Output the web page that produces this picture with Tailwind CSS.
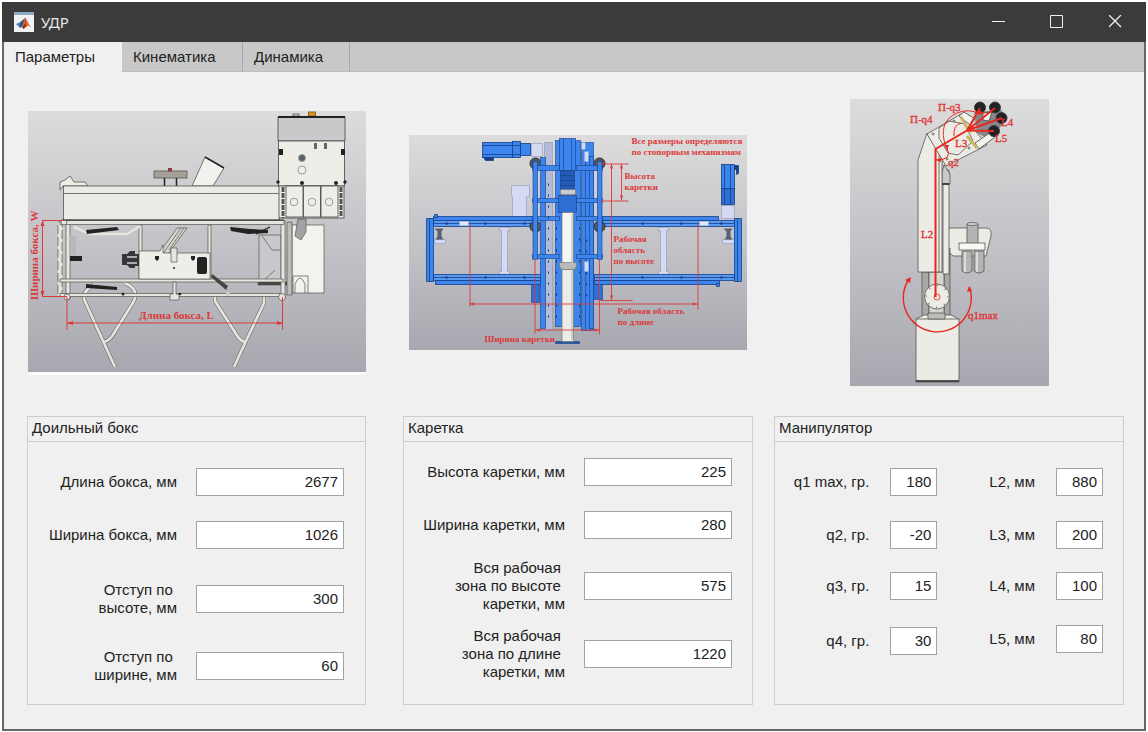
<!DOCTYPE html>
<html lang="ru">
  <head>
    <meta charset="UTF-8" />
    <meta name="viewport" content="width=device-width, initial-scale=1.0" />
    <title>УДР</title>
    <script src="https://cdn.jsdelivr.net/npm/@tailwindcss/browser@4"></script>
  </head>
  <body class="bg-white">
    <div
      class="min-h-screen p-[2px] pb-px flex flex-col font-['Liberation_Sans',Arial,sans-serif] text-[15px] leading-[18px] text-[#222222]"
    >
      <div class="grow flex flex-col bg-[#f0f0f0] border-2 border-t-0 border-[#666666]">
        <!-- Title bar -->
        <header class="-mx-[2px] h-10 flex items-center bg-[#3b3b3b] text-[#e8e8e8]">
          <svg class="ml-3 w-5 h-5" viewBox="0 0 20 20">
            <rect width="20" height="20" fill="#f1f2f4" />
            <rect width="20" height="3" fill="#8fa9c4" />
            <path d="M2 12L6.500 10L9.500 13L6 16Z" fill="#4a86b8" />
            <path d="M6.500 10L11 6L9.500 13L6 16Z" fill="#27517c" />
            <path d="M11 5.500C13 7 14 12 17.500 15.500L14 13.500L9.500 17L8 14Z" fill="#d9662b" />
            <path d="M11 5.500L11 12L8 15L9.500 17L12 14Z" fill="#8c2f1c" />
          </svg>
          <h1 class="ml-[7px] grow font-['Noto_Sans',sans-serif]">УДР</h1>
          <button type="button" aria-label="Свернуть" class="w-[58px] h-full flex items-center justify-center">
            <svg class="w-[14px] h-[14px]" viewBox="0 0 14 14" stroke="#f0f0f0"><path d="M0 6.500H13" /></svg>
          </button>
          <button type="button" aria-label="Развернуть" class="w-[58px] h-full flex items-center justify-center">
            <svg class="w-[14px] h-[14px]" viewBox="0 0 14 14" fill="none" stroke="#f0f0f0"><path d="M0.500 0.500H12.500V12.500H0.500Z" /></svg>
          </button>
          <button type="button" aria-label="Закрыть" class="w-[60px] h-full flex items-center justify-center">
            <svg class="w-[14px] h-[14px]" viewBox="0 0 14 14" stroke="#f0f0f0" stroke-width="1.3"><path d="M0 0L12 12M12 0L0 12" /></svg>
          </button>
        </header>

        <!-- Tabs -->
        <nav role="tablist" class="flex h-[30px] bg-[#c8c8c8]">
          <button type="button" role="tab" aria-selected="true" class="w-[118px] pl-[11px] text-left bg-[#f0f0f0]">Параметры</button>
          <button type="button" role="tab" aria-selected="false" class="w-[121px] pl-[11px] text-left border-r border-b border-r-[#a8a8a8] border-b-[#bdbdbd]">Кинематика</button>
          <button type="button" role="tab" aria-selected="false" class="w-[107px] pl-[11px] text-left border-r border-b border-r-[#a8a8a8] border-b-[#bdbdbd]">Динамика</button>
          <div class="grow border-b border-[#bdbdbd]"></div>
        </nav>

        <main class="pl-[23px] pr-5 pb-6 flex">
          <!-- Milking box -->
          <section class="flex-[339] flex flex-col">
            <div class="h-[344px] pb-[3px] flex items-center justify-center">
              <svg class="w-[338px] h-[264px]" viewBox="28 111 338 264" role="img" aria-label="Доильный бокс">
                <defs>
                  <linearGradient id="sky" x1="0" y1="0" x2="0" y2="1">
                    <stop offset="0" stop-color="#dcdcdc" />
                    <stop offset="0.5" stop-color="#c3c3c8" />
                    <stop offset="1" stop-color="#a7a7af" />
                  </linearGradient>
                </defs>
                <rect x="28" y="111" width="338" height="264" fill="#fafafa" />
                <rect x="28" y="111" width="338" height="261" fill="url(#sky)" />
                <!-- legs -->
                <g fill="none" stroke-linejoin="round">
                  <g stroke="#77776f" stroke-width="4">
                    <path d="M95 284Q83 290 84 299L103 341L115 367" />
                    <path d="M125 283Q139 289 134 301L114 333Q110 341 103 342" />
                    <path d="M215 295V301L236 334Q240 341 245 342" />
                    <path d="M264 293V303L246 341L234 367" />
                  </g>
                  <g stroke="#e6e5df" stroke-width="2.600">
                    <path d="M95 284Q83 290 84 299L103 341L115 367" />
                    <path d="M125 283Q139 289 134 301L114 333Q110 341 103 342" />
                    <path d="M215 295V301L236 334Q240 341 245 342" />
                    <path d="M264 293V303L246 341L234 367" />
                  </g>
                </g>
                <!-- right side units -->
                <g stroke="#55554f" stroke-width="0.700" fill="#f3f2ee">
                  <path d="M292 225H324V293H292Z" />
                  <path d="M293 293V276H308V293M295 293V284Q300 272 305 284V293" fill="none" />
                  <path d="M259 235H281V284H259Z" fill="#c9c9cd" />
                  <path d="M262 236L272 250H280M262 282L275 270" fill="none" />
                  <path d="M258 282H291V285H258Z" fill="#444444" />
                  <path d="M287 222H292V295H287Z" fill="#bcbcb8" />
                  <path d="M298 219H306V232L301 240L295 236Z" fill="#a3a3a5" />
                </g>
                <!-- frame -->
                <g fill="#e6e5df" stroke="#55554f" stroke-width="0.700">
                  <path d="M160 252L177 228H187L168 254Z" fill="#d5d4ce" />
                  <path d="M164 252L181 228M169 250L184 228" fill="none" />
                  <rect x="58" y="222" width="4" height="74" stroke-dasharray="9 3" />
                  <rect x="66" y="221" width="4" height="78" />
                  <rect x="139" y="225" width="3" height="55" />
                  <rect x="208" y="225" width="3" height="55" />
                  <rect x="281" y="221" width="4" height="77" />
                  <path d="M74 227L90 234H127L140 226" fill="none" stroke="#e6e5df" stroke-width="2.500" />
                  <path d="M256 234L270 227" fill="none" stroke="#444444" stroke-width="1.500" />
                  <rect x="60" y="220.500" width="224" height="4" />
                  <rect x="60" y="279" width="223" height="3" />
                  <rect x="60" y="293.500" width="220" height="3" />
                  <path d="M173 282H176V294H179V300H170V294H173Z" />
                  <circle cx="67" cy="297" r="3" />
                  <circle cx="282" cy="297" r="3.500" />
                  <circle cx="64" cy="222" r="3" />
                  <path d="M139 251H160L163 245V253H210V279H139Z" fill="#eeede8" />
                  <path d="M171 248H177V262H171Z" />
                </g>
                <g fill="#222222">
                  <path d="M122 254H127L130 251H135V254H139V266H135V268H130L127 265H122Z" fill="#33373a" />
                  <path d="M127 256H137V258H127ZM127 262H137V264H127Z" fill="#a9acae" />
                  <rect x="197" y="257" width="10" height="17" rx="2" />
                  <path d="M155 256H159V259L157 261L155 259ZM191 256H195V259L193 261L191 259Z" />
                  <rect x="70" y="256" width="12" height="5" />
                  <path d="M70 236H76V255H70Z" fill="#b8b8b8" />
                  <path d="M86 230L117 227L119 230L87 234Z" />
                  <path d="M86 284L117 287V290L86 288Z" />
                  <path d="M230 227L250 229L268 230V233L248 234L231 231Z" />
                  <path d="M212 274L228 286L226 290L211 277Z" fill="#444444" />
                  <circle cx="174" cy="268" r="1" />
                  <circle cx="228" cy="294" r="2" fill="#d0d0d0" />
                  <circle cx="123" cy="294" r="1.500" />
                  <circle cx="180" cy="294" r="1.300" />
                </g>
                <!-- upper beam -->
                <g stroke="#55554f" stroke-width="0.800" fill="#ecebe6">
                  <path d="M60 190V182L65 180L70 176L74 182H85L88 186H63Z" />
                  <path d="M192 186L205 157L224 168L213 186Z" fill="#f2f1ed" />
                  <path d="M205 157L224 168" stroke="#222222" stroke-width="1.500" />
                  <rect x="154" y="171" width="33" height="7" fill="#a5a198" />
                  <path d="M164.500 178V186M176.500 178V186" stroke="#222222" stroke-width="1.500" />
                  <rect x="168.500" y="168.500" width="3" height="2.500" fill="#a03030" stroke="#803030" />
                  <rect x="63.500" y="186" width="216" height="34" />
                  <path d="M63 193.500H279" />
                  <path d="M63 220H284" stroke="#222222" />
                </g>
                <!-- control cabinet -->
                <g stroke="#444444" stroke-width="0.800" fill="#eeede8">
                  <rect x="308.500" y="112" width="7" height="4" fill="#e09424" stroke="#80500f" />
                  <path d="M293 114H299V116H293Z" />
                  <path d="M278 117H345V141H278Z" fill="#c9c9cb" />
                  <path d="M278 117H345" stroke="#222222" stroke-width="2" />
                  <rect x="278.500" y="141" width="66" height="45" />
                  <rect x="279" y="186" width="65" height="32" />
                  <rect x="286" y="186" width="17" height="31" />
                  <rect x="303.500" y="186" width="17" height="31" />
                  <rect x="321" y="186" width="17" height="31" />
                  <path d="M283 187V218M341 187V216" stroke="#555555" stroke-width="3" stroke-dasharray="5 1" />
                  <circle cx="302" cy="158" r="3.500" fill="#59616a" stroke="#9a9a9a" />
                  <circle cx="302" cy="170" r="4" stroke="#888888" />
                  <circle cx="294" cy="202" r="3.800" stroke="#888888" />
                  <circle cx="312" cy="202" r="3.800" stroke="#888888" />
                  <circle cx="329" cy="202" r="3.800" stroke="#888888" />
                </g>
                <g fill="#222222">
                  <circle cx="302" cy="183" r="2" />
                  <circle cx="336" cy="183" r="2" />
                  <circle cx="278" cy="182" r="1.700" />
                  <circle cx="345" cy="182" r="1.700" />
                  <rect x="314" y="143" width="3" height="6" fill="#666666" />
                  <rect x="324" y="143" width="3" height="6" fill="#666666" />
                  <rect x="279" y="149" width="4" height="6" />
                  <rect x="341" y="149" width="4" height="6" />
                </g>
                <!-- dimensions -->
                <g stroke="#dc3a3a" fill="none">
                  <path d="M42.500 221V297M42 220.500H63M42 296.500H67" />
                  <path d="M67 323H283M67 297V330M282.500 297V330" />
                </g>
                <path d="M42.500 220L40.500 226H44.500ZM42.500 297L40.500 291H44.500ZM67 323L73 321V325ZM283 323L277 321V325Z" fill="#dc3a3a" />
                <g fill="#dc3a3a" class="font-['Liberation_Serif',serif] text-[11px] font-bold">
                  <text x="139" y="319">Длина бокса, L</text>
                  <text transform="translate(38 300) rotate(-90)">Ширина бокса, W</text>
                </g>
              </svg>
            </div>

            <div class="h-[289px] border border-[#cdcdcd]">
              <h2 class="h-[25px] pl-1 pt-[2px] border-b border-[#cdcdcd]">Доильный бокс</h2>
              <div class="pr-[21px] text-right">
                <div class="mt-[26px] flex items-center justify-end gap-[19px]">
                  <label for="boxLength">Длина бокса, мм</label>
                  <input id="boxLength" type="text" value="2677" class="w-[148px] h-7 pr-[5px] pb-[2px] text-right bg-white border border-[#a3a3a3]" />
                </div>
                <div class="mt-[25px] flex items-center justify-end gap-[19px]">
                  <label for="boxWidth">Ширина бокса, мм</label>
                  <input id="boxWidth" type="text" value="1026" class="w-[148px] h-7 pr-[5px] pb-[2px] text-right bg-white border border-[#a3a3a3]" />
                </div>
                <div class="mt-8 flex items-center justify-end gap-[19px]">
                  <label for="offsetHeight">Отступ по&nbsp;<br />высоте, мм</label>
                  <input id="offsetHeight" type="text" value="300" class="w-[148px] h-7 pr-[5px] pb-[2px] text-right bg-white border border-[#a3a3a3]" />
                </div>
                <div class="mt-[31px] flex items-center justify-end gap-[19px]">
                  <label for="offsetWidth">Отступ по&nbsp;<br />ширине, мм</label>
                  <input id="offsetWidth" type="text" value="60" class="w-[148px] h-7 pr-[5px] pb-[2px] text-right bg-white border border-[#a3a3a3]" />
                </div>
              </div>
            </div>
          </section>

          <!-- Carriage -->
          <section class="ml-[37px] flex-[350] flex flex-col">
            <div class="h-[344px] pb-[3px] flex items-center justify-center">
              <svg class="w-[338px] h-[215px]" viewBox="409.500 135.500 338 215" role="img" aria-label="Каретка">
                <rect x="409" y="135" width="339" height="216" fill="url(#sky)" />
                <!-- light parts -->
                <g fill="#d5d9f3" stroke="#8f96b5" stroke-width="0.600">
                  <path d="M532 144H543V157H532Z" />
                  <path d="M512 186H530V197H527V218H513V197H512Z" />
                  <path d="M500 228H510V231H508V272H510V275H500V272H502V231H500Z" />
                  <path d="M659 228H669V231H667V272H669V275H659V272H661V231H659Z" />
                  <rect x="722" y="206" width="13" height="13" />
                  <path d="M435 240H446V244H435ZM723 240H735V244H723Z" />
                  <rect x="545" y="143" width="8" height="188" fill="#b4bbd8" />
                </g>
                <path d="M435 229H444L442 232V237L444 240H436L438 237V232ZM724 229H733L731 232V237L733 240H725L727 237V232Z" fill="#5b6070" />
                <!-- side frames -->
                <g fill="#3c84ee" stroke="#163f86" stroke-width="0.800">
                  <path d="M434 217H534V221H434ZM603 217H719V221H603Z" />
                  <path d="M434 221H534V227H434ZM603 221H735V227H603Z" fill="#5a9af3" />
                  <path d="M434 275H541V281H434ZM595 275H735V281H595Z" fill="#5a9af3" />
                  <path d="M436 281H541V285H436ZM595 281H720V285H595Z" />
                  <path d="M427 219H434V282H427ZM735 219H742V282H735Z" />
                  <path d="M430 219V282M738 219V282M434 224H534M603 224H735M434 278H541M595 278H735" fill="none" />
                  <path d="M435 215H438V218H435ZM717 284H720V287H717Z" />
                </g>
                <g fill="#163f86">
                  <circle cx="447" cy="224" r="1.300" /><circle cx="486" cy="224" r="1.300" /><circle cx="525" cy="224" r="1.300" />
                  <circle cx="447" cy="278" r="1.300" /><circle cx="486" cy="278" r="1.300" /><circle cx="525" cy="278" r="1.300" />
                  <circle cx="643" cy="224" r="1.300" /><circle cx="682" cy="224" r="1.300" /><circle cx="722" cy="224" r="1.300" />
                  <circle cx="643" cy="278" r="1.300" /><circle cx="682" cy="278" r="1.300" /><circle cx="722" cy="278" r="1.300" />
                </g>
                <path d="M460 222H469V226H460ZM700 222H709V226H700Z" fill="#e6e8f5" />
                <!-- motors -->
                <g fill="#3c84ee" stroke="#163f86" stroke-width="0.800">
                  <rect x="483" y="143" width="31" height="15" />
                  <rect x="513" y="142" width="8" height="16" />
                  <rect x="521" y="144" width="10" height="12" />
                  <path d="M484 158H494V161H486Z" fill="#163f86" />
                  <path d="M483 146H521M483 155H521" fill="none" />
                  <rect x="722" y="165" width="13" height="25" />
                  <rect x="722" y="189" width="13" height="16" fill="#2f6fd4" />
                  <path d="M725 165V205M731 165V205" fill="none" />
                  <path d="M735 166H739V174L737 175V170H735Z" fill="#163f86" />
                </g>
                <!-- carriage -->
                <g fill="#55585c" stroke="#2b2d30">
                  <circle cx="536" cy="164" r="5.500" /><circle cx="536" cy="227" r="5.500" />
                  <circle cx="600" cy="164" r="5.500" /><circle cx="600" cy="227" r="5.500" />
                </g>
                <g fill="#3c84ee" stroke="#163f86" stroke-width="0.600">
                  <path d="M532 285H540V303H532ZM594 285H603V300H594Z" fill="#2f6fd4" />
                  <rect x="541" y="158" width="5" height="171" />
                  <rect x="582" y="143" width="12" height="188" />
                  <path d="M586 143V331" fill="none" />
                  <rect x="590" y="157" width="4" height="172" />
                  <rect x="556" y="141" width="7" height="186" />
                  <rect x="574" y="141" width="7" height="186" />
                  <path d="M533 166H560V171H533ZM533 199H560V203H533ZM533 217H560V221H533ZM533 255H560V259H533Z" />
                  <path d="M577 166H603V171H577ZM577 199H603V203H577ZM577 217H603V221H577ZM577 255H603V259H577Z" />
                  <rect x="533.500" y="162" width="4.500" height="98" />
                  <rect x="598" y="162" width="4.500" height="98" />
                  <rect x="560" y="139" width="16" height="32" />
                  <path d="M564 139V171M572 139V171" fill="none" />
                  <rect x="561" y="171" width="14" height="20" fill="#2459b4" />
                  <path d="M561 176H575M561 181H575M561 186H575" fill="none" />
                  <rect x="559" y="196" width="18" height="17" fill="#2f6fd4" />
                  <path d="M556 342H580V344H556Z" fill="#23589e" />
                </g>
                <g fill="none" stroke="#102f66" stroke-width="1" stroke-dasharray="2 9">
                  <path d="M557 228V325M580 228V325" />
                  <path d="M549 184V322M587 240V300" />
                </g>
                <path d="M587 152V162M587 262V272M584 143V150" stroke="#d5d9f3" stroke-width="4" />
                <!-- pipe -->
                <g stroke="#77776f" stroke-width="0.700">
                  <path d="M561 190H576V195H561Z" fill="#c9ccd8" />
                  <path d="M562.500 213H574V265H562.500Z" fill="#f6f6f4" />
                  <path d="M562.500 270H574V342H562.500Z" fill="#ebebe7" />
                  <path d="M560 263H577V267L575 270H562L560 267Z" fill="#b9bab9" />
                  <path d="M572.500 214V264M572.500 271V341" stroke="#c6c6c3" stroke-width="1.500" />
                </g>
                <!-- dimensions -->
                <g stroke="#dc3a3a" stroke-width="0.900" fill="none">
                  <path d="M470.500 224V307M698.500 224V310M470 304.500H698" />
                  <path d="M535.500 260V334M600 260V335M536 330.500H600" />
                  <path d="M612 164V301M600 164.500H629M622 164V201M600 201.500H629M601 301H633" />
                </g>
                <path d="M470 304.500L475 303V306ZM698 304.500L693 303V306ZM536 330.500L541 329V332ZM600 330.500L595 329V332ZM612 164L610.500 169H613.500ZM612 301L610.500 296H613.500ZM622 164L620.500 169H623.500ZM622 201L620.500 196H623.500Z" fill="#dc3a3a" />
                <g fill="#dc3a3a" class="font-['Liberation_Serif',serif] text-[9px] font-bold">
                  <text x="632" y="144">Все размеры определяются</text>
                  <text x="632" y="155">по стопорным механизмам</text>
                  <text x="625" y="179">Высота</text>
                  <text x="625" y="190">каретки</text>
                  <text x="614" y="242">Рабочая</text>
                  <text x="614" y="253">область</text>
                  <text x="614" y="264">по высоте</text>
                  <text x="618" y="314">Рабочая область</text>
                  <text x="618" y="325">по длине</text>
                  <text x="485" y="342">Ширина каретки</text>
                </g>
              </svg>
            </div>

            <div class="h-[289px] border border-[#cdcdcd]">
              <h2 class="h-[25px] pl-1 pt-[2px] border-b border-[#cdcdcd]">Каретка</h2>
              <div class="pr-5 text-right">
                <div class="mt-4 flex items-center justify-end gap-[19px]">
                  <label for="carriageHeight">Высота каретки, мм</label>
                  <input id="carriageHeight" type="text" value="225" class="w-[148px] h-7 pr-[5px] pb-[2px] text-right bg-white border border-[#a3a3a3]" />
                </div>
                <div class="mt-[25px] flex items-center justify-end gap-[19px]">
                  <label for="carriageWidth">Ширина каретки, мм</label>
                  <input id="carriageWidth" type="text" value="280" class="w-[148px] h-7 pr-[5px] pb-[2px] text-right bg-white border border-[#a3a3a3]" />
                </div>
                <div class="mt-5 flex items-center justify-end gap-[19px]">
                  <label for="zoneHeight">Вся рабочая&nbsp;<br />зона по высоте&nbsp;<br />каретки, мм</label>
                  <input id="zoneHeight" type="text" value="575" class="w-[148px] h-7 pr-[5px] pb-[2px] text-right bg-white border border-[#a3a3a3]" />
                </div>
                <div class="mt-[14px] flex items-center justify-end gap-[19px]">
                  <label for="zoneLength">Вся рабочая&nbsp;<br />зона по длине&nbsp;<br />каретки, мм</label>
                  <input id="zoneLength" type="text" value="1220" class="w-[148px] h-7 pr-[5px] pb-[2px] text-right bg-white border border-[#a3a3a3]" />
                </div>
              </div>
            </div>
          </section>

          <!-- Manipulator -->
          <section class="ml-[21px] flex-[350] flex flex-col">
            <div class="h-[344px] pb-[3px] flex items-center justify-center">
              <svg class="w-[199px] h-[287px]" viewBox="849 99 199 287" role="img" aria-label="Манипулятор">
                <rect x="849" y="99" width="199" height="287" fill="url(#sky)" />
                <g fill="#ecebe6" stroke="#55554f" stroke-width="0.800">
                  <!-- side pump -->
                  <path d="M948 228H986Q991 229 990 236L985 256H952L944 248Z" />
                  <path d="M966 224H977V244H966Z" fill="#b4b4b4" />
                  <ellipse cx="971.500" cy="224" rx="5.500" ry="1.500" fill="#d5d5d5" />
                  <path d="M961 251H971V271Q966 275 961 271ZM973 251H983V271Q978 275 973 271Z" fill="#b4b4b4" />
                  <path d="M964 252V272M976 252V272" stroke="#dcdcdc" stroke-width="2" />
                  <path d="M958 243H984V250H958Z" fill="#f7f7f5" />
                  <!-- lower post and base -->
                  <path d="M921 272H928V316H921ZM943 248H949V316H943Z" fill="#a8a8a8" />
                  <path d="M928 272H943V316H928Z" fill="#d5d5d0" />
                  <path d="M915 319L923 315H950L958 319V382H915Z" />
                  <path d="M915 319H958" />
                  <path d="M927 313H944V319H927Z" fill="#bcbcbc" />
                  <path d="M915 381H958" stroke="#222222" stroke-width="1.500" />
                  <circle cx="936" cy="296.500" r="12.500" />
                  <circle cx="936" cy="296.500" r="11" fill="none" stroke="#777777" stroke-width="2" stroke-dasharray="1 7.600" />
                  <!-- arm -->
                  <path d="M942 170H948V274H942Z" />
                  <path d="M941 172L943 165L949 174V184H941Z" fill="#c9c9c9" />
                  <path d="M941 184H948" stroke="#222222" stroke-width="1.500" />
                  <path d="M926 133L917 160V272H941V158Z" />
                  <path d="M938 155V272" fill="none" />
                  <path d="M926 134L960 114L986 145L945 166Z" />
                  <path d="M938 128L948 121L964 124L972 141L957 155L947 153L938 138Z" fill="none" />
                  <circle cx="932" cy="134" r="1" /><circle cx="953" cy="121" r="1" />
                  <circle cx="946" cy="159" r="1" /><circle cx="968" cy="148" r="1" />
                </g>
                <!-- gripper -->
                <path d="M973 112L1001 110L1003 123L988 139L976 133Z" fill="#85878b" />
                <g fill="#f4f3ef" stroke="#444444" stroke-width="0.800">
                  <path d="M963 112L974 119L969 125L958 116Z" />
                  <path d="M974 143L990 132L994 137L978 149Z" />
                  <path d="M982 113L991 112L988 121L982 120Z" />
                  <path d="M960 117L969 133M966 136L976 148" stroke="#c9b765" stroke-width="3" />
                </g>
                <g fill="#202224" stroke="#3c4043">
                  <circle cx="979" cy="107.500" r="5.500" /><circle cx="994" cy="107.500" r="5.500" />
                  <circle cx="1000.500" cy="118" r="5.500" /><circle cx="993" cy="131" r="5.500" />
                </g>
                <!-- kinematic lines -->
                <g stroke="#e8291f" stroke-width="2" fill="none">
                  <path d="M934.500 297V149L966 130.500" />
                  <path d="M966 130.500L979 108M966 130.500L994 108M966 130.500L1001 118M966 130.500L993 131" />
                </g>
                <circle cx="936" cy="297" r="3" fill="none" stroke="#e8291f" stroke-width="0.800" />
                <g stroke="#e8291f" fill="none">
                  <path d="M908 279A34 34 0 1 0 968.500 287" stroke-width="1.400" />
                  <path d="M953 136Q952 125 960 123M945 147Q936 122 956 113Q968 108 979 114" />
                  <path d="M946 148Q952 160 935 160" />
                </g>
                <path d="M910 277L904 280L909 283ZM968 286L966 292L971 291ZM946 150L943 145L948 145ZM935 160L940 158V162ZM984 113L978 110V115Z" fill="#e8291f" />
                <g fill="#e03030" stroke="#e03030" stroke-width="0.300" class="font-['Liberation_Serif',serif] text-[11px]">
                  <text x="937" y="111">П-q3</text>
                  <text x="909" y="123">П-q4</text>
                  <text x="954" y="147">L3</text>
                  <text x="947" y="166">q2</text>
                  <text x="1000" y="126">L4</text>
                  <text x="994" y="142">L5</text>
                  <text x="920" y="238">L2</text>
                  <text x="967" y="319">q1max</text>
                </g>
              </svg>
            </div>

            <div class="h-[289px] border border-[#cdcdcd]">
              <h2 class="h-[25px] pl-1 pt-[2px] border-b border-[#cdcdcd]">Манипулятор</h2>
              <div class="pr-5 flex justify-end gap-[52px]">
                <div>
                  <div class="mt-[26px] flex items-center justify-end gap-[21px]">
                    <label for="q1">q1 max, гр.</label>
                    <input id="q1" type="text" value="180" class="w-[47px] h-7 pr-[5px] pb-[2px] text-right bg-white border border-[#a3a3a3]" />
                  </div>
                  <div class="mt-[25px] flex items-center justify-end gap-[21px]">
                    <label for="q2">q2, гр.</label>
                    <input id="q2" type="text" value="-20" class="w-[47px] h-7 pr-[5px] pb-[2px] text-right bg-white border border-[#a3a3a3]" />
                  </div>
                  <div class="mt-[23px] flex items-center justify-end gap-[21px]">
                    <label for="q3">q3, гр.</label>
                    <input id="q3" type="text" value="15" class="w-[47px] h-7 pr-[5px] pb-[2px] text-right bg-white border border-[#a3a3a3]" />
                  </div>
                  <div class="mt-[27px] flex items-center justify-end gap-[21px]">
                    <label for="q4">q4, гр.</label>
                    <input id="q4" type="text" value="30" class="w-[47px] h-7 pr-[5px] pb-[2px] text-right bg-white border border-[#a3a3a3]" />
                  </div>
                </div>
                <div>
                  <div class="mt-[26px] flex items-center justify-end gap-[21px]">
                    <label for="l2">L2, мм</label>
                    <input id="l2" type="text" value="880" class="w-[47px] h-7 pr-[5px] pb-[2px] text-right bg-white border border-[#a3a3a3]" />
                  </div>
                  <div class="mt-[25px] flex items-center justify-end gap-[21px]">
                    <label for="l3">L3, мм</label>
                    <input id="l3" type="text" value="200" class="w-[47px] h-7 pr-[5px] pb-[2px] text-right bg-white border border-[#a3a3a3]" />
                  </div>
                  <div class="mt-[23px] flex items-center justify-end gap-[21px]">
                    <label for="l4">L4, мм</label>
                    <input id="l4" type="text" value="100" class="w-[47px] h-7 pr-[5px] pb-[2px] text-right bg-white border border-[#a3a3a3]" />
                  </div>
                  <div class="mt-[25px] flex items-center justify-end gap-[21px]">
                    <label for="l5">L5, мм</label>
                    <input id="l5" type="text" value="80" class="w-[47px] h-7 pr-[5px] pb-[2px] text-right bg-white border border-[#a3a3a3]" />
                  </div>
                </div>
              </div>
            </div>
          </section>
        </main>
      </div>
    </div>
  </body>
</html>
